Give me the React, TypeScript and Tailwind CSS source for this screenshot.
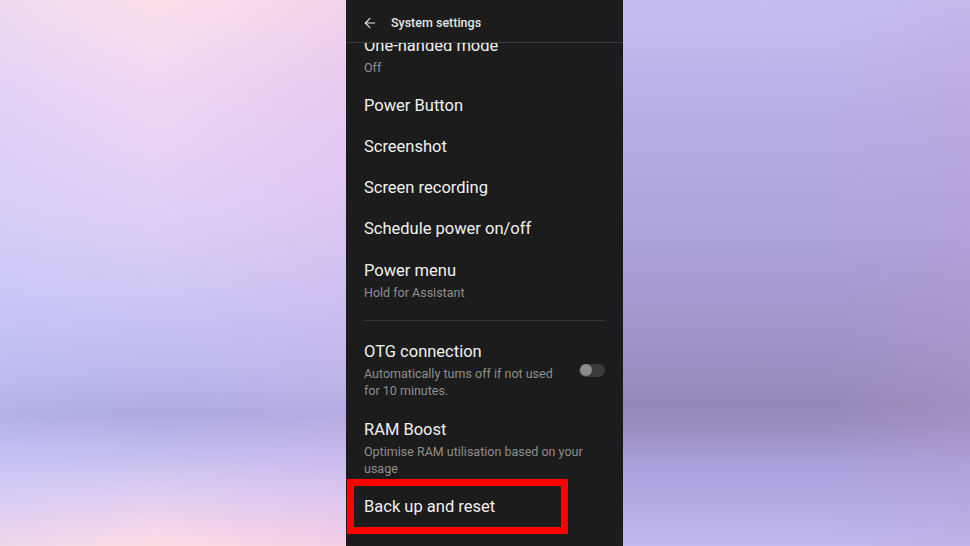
import React from "react";
import { ArrowLeft } from "lucide-react";

type Item = { title: string; sub?: string; toggle?: boolean };

const top: Item[] = [
  { title: "One-handed mode", sub: "Off" },
  { title: "Power Button" },
  { title: "Screenshot" },
  { title: "Screen recording" },
  { title: "Schedule power on/off" },
  { title: "Power menu", sub: "Hold for Assistant" },
];

const bottom: Item[] = [
  {
    title: "OTG connection",
    sub: "Automatically turns off if not used for 10 minutes.",
    toggle: true,
  },
  { title: "RAM Boost", sub: "Optimise RAM utilisation based on your usage" },
];

function Row({ item }: { item: Item }) {
  return (
    <div
      className={
        item.sub
          ? "flex items-center justify-between px-[18px] py-[9.75px]"
          : "flex items-center justify-between px-[18px] py-[9.5px]"
      }
    >
      <div className={item.toggle ? "min-w-0 flex-1 pr-[20px]" : "min-w-0 flex-1"}>
        <p className="text-[16.5px] leading-[22px] text-[#f1f1f1]">{item.title}</p>
        {item.sub && (
          <p className="mt-[2px] text-[12.5px] leading-[17px] text-[#8e8e8e]">{item.sub}</p>
        )}
      </div>
      {item.toggle && (
        <div className="flex h-[13px] w-[26px] shrink-0 items-center rounded-full bg-[#3b3b3b] px-[1px]">
          <div className="h-[12px] w-[12px] rounded-full bg-[#8c8c8c]" />
        </div>
      )}
    </div>
  );
}

export default function App() {
  return (
    <div className="flex h-[546px] w-[970px] overflow-hidden font-['Roboto',sans-serif]">
      {/* left wallpaper */}
      <div className="relative w-[346px] bg-[linear-gradient(180deg,#fce0ea_0%,#f0d6f4_16%,#e0d0f6_38%,#cbc5f4_56%,#bbb9ee_68%,#adabe1_76%,#c0bbef_82%,#dccdf3_90%,#f6d6ea_97%,#fcdde4_100%)]">
        <div className="absolute inset-0 bg-[linear-gradient(90deg,rgba(190,200,255,0.25)_0%,rgba(0,0,0,0)_45%,rgba(210,170,230,0.25)_100%)]" />
      </div>

      {/* phone */}
      <div className="flex w-[277px] flex-col bg-[#1c1c1c]">
        <div className="flex h-[43px] shrink-0 items-center gap-[13px] border-b border-[#3a3a3a] pl-[16px] pt-[4px]">
          <ArrowLeft size={16} strokeWidth={1.6} className="text-[#e6e6e6]" />
          <span className="text-[12.5px] font-medium text-[#e4e4e4]">System settings</span>
        </div>
        <div className="flex-1 overflow-hidden">
          <div className="-mt-[17.75px]">
            {top.map((it) => (
              <Row key={it.title} item={it} />
            ))}
            <div className="mx-[18px] mb-[10.25px] mt-[9.75px] h-px bg-[#363636]" />
            {bottom.map((it) => (
              <Row key={it.title} item={it} />
            ))}
            <div className="relative">
              <Row item={{ title: "Back up and reset" }} />
              <div className="absolute -bottom-[6.5px] left-[1px] right-[55px] -top-[7px] border-[7px] border-[#ff0000]" />
            </div>
          </div>
        </div>
      </div>

      {/* right wallpaper */}
      <div className="relative flex-1 bg-[linear-gradient(180deg,#c6bef1_0%,#b9ade7_22%,#aea2df_42%,#a295cb_60%,#9689b9_74%,#9a8dbf_78%,#aa9fdc_85%,#b4aae6_92%,#c2b8f0_100%)]">
        <div className="absolute inset-0 bg-[linear-gradient(90deg,rgba(0,0,0,0)_60%,rgba(190,160,210,0.25)_100%)]" />
      </div>
    </div>
  );
}
